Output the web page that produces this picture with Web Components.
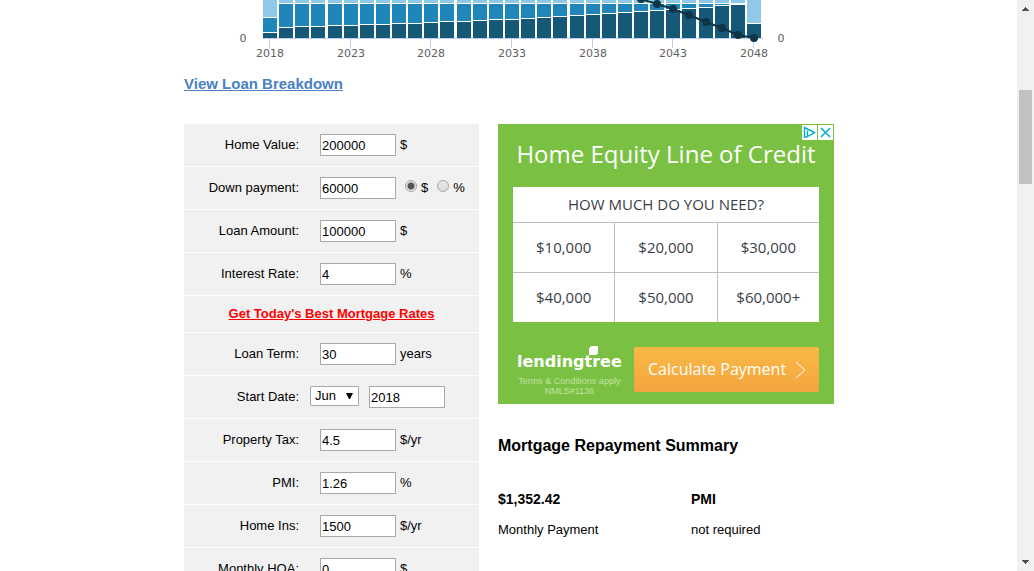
<!DOCTYPE html>
<html lang="en">
<head>
<meta charset="utf-8">
<title>Mortgage Calculator</title>
<style>
  html, body { height: 100%; margin: 0; overflow: hidden; }
  body { background: #fff; color: #000; font: 13px/18px "Liberation Sans", Arial, sans-serif; }
</style>
</head>
<body>
<mortgage-page></mortgage-page>

<script>
function define(name, html, setup) {
  const template = document.createElement('template');
  template.innerHTML = html;
  customElements.define(name, class extends HTMLElement {
    connectedCallback() {
      if (this.shadowRoot) return;
      const root = this.attachShadow({ mode: 'open' });
      root.append(template.content.cloneNode(true));
      if (setup) setup(root, this);
    }
  });
}

/* Yearly stacked bars (interest, principal, taxes) with the balance line */
define('loan-chart', `
<style>
  :host { display: block; }
  svg { display: block; width: 100%; height: 64px; }
  text { font: 11px "DejaVu Sans", Verdana, sans-serif; fill: #606060; text-anchor: middle; }
</style>
<svg viewBox="0 0 650 64" role="img" aria-label="Loan payments per year"></svg>`, root => {
  const svg = root.querySelector('svg');
  const darkTops = [33,28,27,27,26,26,25,25,24,24,23,22,22,21,20,20,19,18,17,16,15,14,13,12,11,10,9,8,6,5,24];
  const balance = { 22: -7, 23: -1, 24: 4, 25: 9, 26: 15, 27: 22, 28: 28, 29: 35, 30: 38 };
  const x = i => Math.round(86 + i * 484 / 30);
  let out = '';
  const rect = (l, t, w, h, fill) => { if (h > 0) out += `<rect x="${l}" y="${t}" width="${w}" height="${h}" fill="${fill}"/>`; };
  darkTops.forEach((top, i) => {
    const midTop = i === 0 ? 18 : i === 30 ? 24 : 4;
    const left = x(i) - 7;
    rect(left, 0, 14, midTop - 1, '#8fc9e8');
    rect(left, midTop, 14, top - 1 - midTop, '#2085b8');
    rect(left, top, 14, 38 - top, '#165877');
  });
  rect(78, 38, 501, 1, '#c0d0e8');
  for (let i = 0; i <= 30; i += 5) {
    rect(x(i) - 1, 39, 1, 9, '#c0d0e8');
    out += `<text x="${x(i)}" y="57">${2018 + i}</text>`;
  }
  out += '<text x="59" y="42">0</text><text x="597" y="42">0</text>';
  const pts = Object.entries(balance).map(([i, y]) => [x(+i), y]);
  out += `<polyline points="${pts.join(' ')}" fill="none" stroke="#0d3447" stroke-width="2"/>`;
  pts.forEach(([px, py]) => { out += `<circle cx="${px}" cy="${py}" r="4" fill="#0d3447"/>`; });
  svg.innerHTML = out;
});

/* One labelled line of the form */
define('calc-field', `
<style>
  :host { display: grid; grid-template-columns: 115px 1fr; column-gap: 21px; align-items: center; height: 42px; background: #f1f1f1; }
  label { text-align: right; }
  div { display: flex; align-items: center; gap: 4px; }
  input { box-sizing: border-box; width: 76px; height: 22px; margin: 0; padding: 1px; border: 1px solid #a9a9a9; background: #fff; color: #000; font: inherit; }
</style>
<label for="value"></label>
<div><input id="value" type="text"><slot></slot></div>`, (root, host) => {
  root.querySelector('label').textContent = host.getAttribute('label');
  root.querySelector('input').value = host.getAttribute('value');
});

define('start-date-field', `
<style>
  :host { display: grid; grid-template-columns: 115px 1fr; column-gap: 11px; align-items: center; height: 42px; background: #f1f1f1; }
  label { text-align: right; }
  .date { display: flex; align-items: flex-start; gap: 10px; }
  .month { position: relative; display: block; height: 20px; }
  select { appearance: none; box-sizing: border-box; width: 49px; height: 20px; margin: 0; padding: 0 0 0 4px; border: 1px solid #a9a9a9; border-radius: 1px; background: #fff; color: #000; font: inherit; }
  svg { position: absolute; right: 6px; top: 7px; pointer-events: none; }
  input { box-sizing: border-box; width: 76px; height: 22px; margin: 0; padding: 1px; border: 1px solid #a9a9a9; background: #fff; font: inherit; }
</style>
<label for="month">Start Date:</label>
<div class="date">
  <span class="month"><select id="month"><option>Jun</option></select>
  <svg width="7" height="6" viewBox="0 0 7 6"><path d="M0 0H7L4 6H3Z" fill="#000"/></svg></span>
  <input type="text" value="2018" aria-label="Start year">
</div>`);

define('calculator-form', `
<style>
  :host { display: block; }
  form { display: grid; row-gap: 1px; }
  .rates { display: grid; place-items: center; height: 36px; background: #f1f1f1; }
  .rates a { color: #f00; font-weight: bold; }
  .option { display: flex; align-items: center; gap: 4px; margin-left: 5px; }
  .option input { appearance: none; box-sizing: border-box; width: 12px; height: 12px; margin: 0 0 4px; border: 1px solid #a5a5a5; border-radius: 50%; background: linear-gradient(#e8e8e8, #dcdcdc); }
  .option input:checked { background: radial-gradient(circle, #555 0 3px, #e3e3e3 4px); }
</style>
<form>
  <calc-field label="Home Value:" value="200000">$</calc-field>
  <calc-field label="Down payment:" value="60000">
    <label class="option"><input type="radio" name="unit" checked>$</label>
    <label class="option"><input type="radio" name="unit">%</label>
  </calc-field>
  <calc-field label="Loan Amount:" value="100000">$</calc-field>
  <calc-field label="Interest Rate:" value="4">%</calc-field>
  <div class="rates"><a href="#rates">Get Today's Best Mortgage Rates</a></div>
  <calc-field label="Loan Term:" value="30">years</calc-field>
  <start-date-field></start-date-field>
  <calc-field label="Property Tax:" value="4.5">$/yr</calc-field>
  <calc-field label="PMI:" value="1.26">%</calc-field>
  <calc-field label="Home Ins:" value="1500">$/yr</calc-field>
  <calc-field label="Monthly HOA:" value="0">$</calc-field>
</form>`);

define('equity-ad', `
<style>
  :host { position: relative; box-sizing: border-box; display: block; height: 280px; padding: 12px 15px; background: #7ac143; color: #fff; font-family: "Open Sans", "Noto Sans", sans-serif; }
  h2 { margin: 0 0 15px; font-size: 24px; line-height: 36px; font-weight: 400; text-align: center; white-space: nowrap; }
  .need { display: grid; grid-template-columns: repeat(3, 1fr); gap: 1px; background: #bdbec0; }
  .need > * { background: #fff; color: #3b3f48; font-size: 15px; }
  .need p { grid-column: 1 / -1; margin: 0; line-height: 35px; text-align: center; }
  .need button { height: 49px; padding: 0 0 2px; border: 0; font-family: inherit; }
  .foot { display: flex; justify-content: space-between; align-items: flex-start; margin-top: 25px; }
  .brand { position: relative; padding-left: 4px; }
  .name { margin: 5px 0 0; font: bold 16px/20px "DejaVu Sans", sans-serif; }
  .leaf { position: absolute; left: 75px; top: -1px; }
  .terms { margin: 4px 0 0; color: #c1e3a5; font: 9px/10px "Liberation Sans", Arial, sans-serif; text-align: center; }
  .cta { display: flex; align-items: center; justify-content: space-between; width: 185px; height: 45px; padding: 0 13px 2px 14px; border: 0; border-radius: 2px; background: linear-gradient(#f8b944, #f4a540); color: #fff; font: 500 16px/24px "Open Sans", "Noto Sans", sans-serif; white-space: nowrap; }
  .cta svg { margin-top: 2px; }
  .choices { position: absolute; top: 1px; right: 1px; display: flex; gap: 1px; }
  .choices a, .choices button { display: block; width: 15px; height: 15px; padding: 0; border: 0; background: #fff; }
  svg { display: block; }
</style>
<h2>Home Equity Line of Credit</h2>
<div class="need">
  <p>HOW MUCH DO YOU NEED?</p>
  <button>$10,000</button><button>$20,000</button><button>$30,000</button>
  <button>$40,000</button><button>$50,000</button><button>$60,000+</button>
</div>
<div class="foot">
  <div class="brand">
    <svg class="leaf" width="11" height="10" viewBox="0 0 11 10"><path d="M1 9V4Q1 0 5 0H10V6Q10 9 7 9Z" fill="#fff"/></svg>
    <p class="name">lendingtree</p>
    <p class="terms">Terms &amp; Conditions apply<br>NMLS#1136</p>
  </div>
  <button class="cta">Calculate Payment
    <svg width="11" height="18" viewBox="0 0 11 18" fill="none" stroke="#fff"><path d="M1 1L10 9L1 17"/></svg>
  </button>
</div>
<div class="choices">
  <a href="#adchoices" aria-label="AdChoices"><svg width="15" height="15" viewBox="0 0 15 15" fill="none" stroke="#00aecd" stroke-width="1.4"><path d="M5 12H2.5V2.5L12.5 7.5L5.5 11.5V5.5"/></svg></a>
  <button aria-label="Close ad"><svg width="15" height="15" viewBox="0 0 15 15" fill="none" stroke="#00aecd" stroke-width="1.5"><path d="M3 3L12 12M12 3L3 12"/></svg></button>
</div>`);

define('repayment-summary', `
<style>
  :host { display: block; }
  h2 { margin: 0 0 33px; font-size: 16px; line-height: 20px; }
  dl { display: grid; grid-template-columns: 193px 1fr; margin: 0; }
  dl div { display: flex; flex-direction: column-reverse; gap: 12px; }
  dt { line-height: 18px; }
  dd { margin: 0; font-size: 14px; line-height: 20px; font-weight: bold; }
</style>
<h2>Mortgage Repayment Summary</h2>
<dl>
  <div><dt>Monthly Payment</dt><dd>$1,352.42</dd></div>
  <div><dt>not required</dt><dd>PMI</dd></div>
</dl>`);

define('scroll-rail', `
<style>
  :host { display: flex; flex-direction: column; align-items: center; width: 17px; background: #f1f1f1; }
  .track { flex: 1; width: 13px; display: grid; grid-template-rows: 73fr 94fr 370fr; }
  .thumb { grid-row: 2; background: #c1c1c1; }
  svg { display: block; flex: none; }
</style>
<svg width="17" height="17" viewBox="0 0 17 17"><path d="M8 7h1v1h1v1h1v1h1v1H5v-1h1V9h1V8h1Z" fill="#505050"/></svg>
<div class="track"><div class="thumb"></div></div>
<svg width="17" height="17" viewBox="0 0 17 17"><path d="M5 6h7v1h-1v1h-1v1H9v1H8V9H7V8H6V7H5Z" fill="#505050"/></svg>`);

define('mortgage-page', `
<style>
  :host { display: flex; height: 100vh; }
  main { flex: 1; min-width: 0; padding-left: 1px; overflow: hidden; }
  .content { max-width: 650px; margin: 0 auto; }
  .breakdown { display: block; width: fit-content; margin: 10px 0 30px; color: #4a80c4; font-size: 15px; line-height: 20px; font-weight: bold; }
  .columns { display: grid; grid-template-columns: 295fr 336fr; column-gap: 19px; align-items: start; }
  repayment-summary { margin-top: 32px; }
</style>
<main>
  <div class="content">
    <loan-chart></loan-chart>
    <a class="breakdown" href="#breakdown">View Loan Breakdown</a>
    <div class="columns">
      <calculator-form></calculator-form>
      <aside><equity-ad></equity-ad><repayment-summary></repayment-summary></aside>
    </div>
  </div>
</main>
<scroll-rail aria-hidden="true"></scroll-rail>`);
</script>
</body>
</html>
